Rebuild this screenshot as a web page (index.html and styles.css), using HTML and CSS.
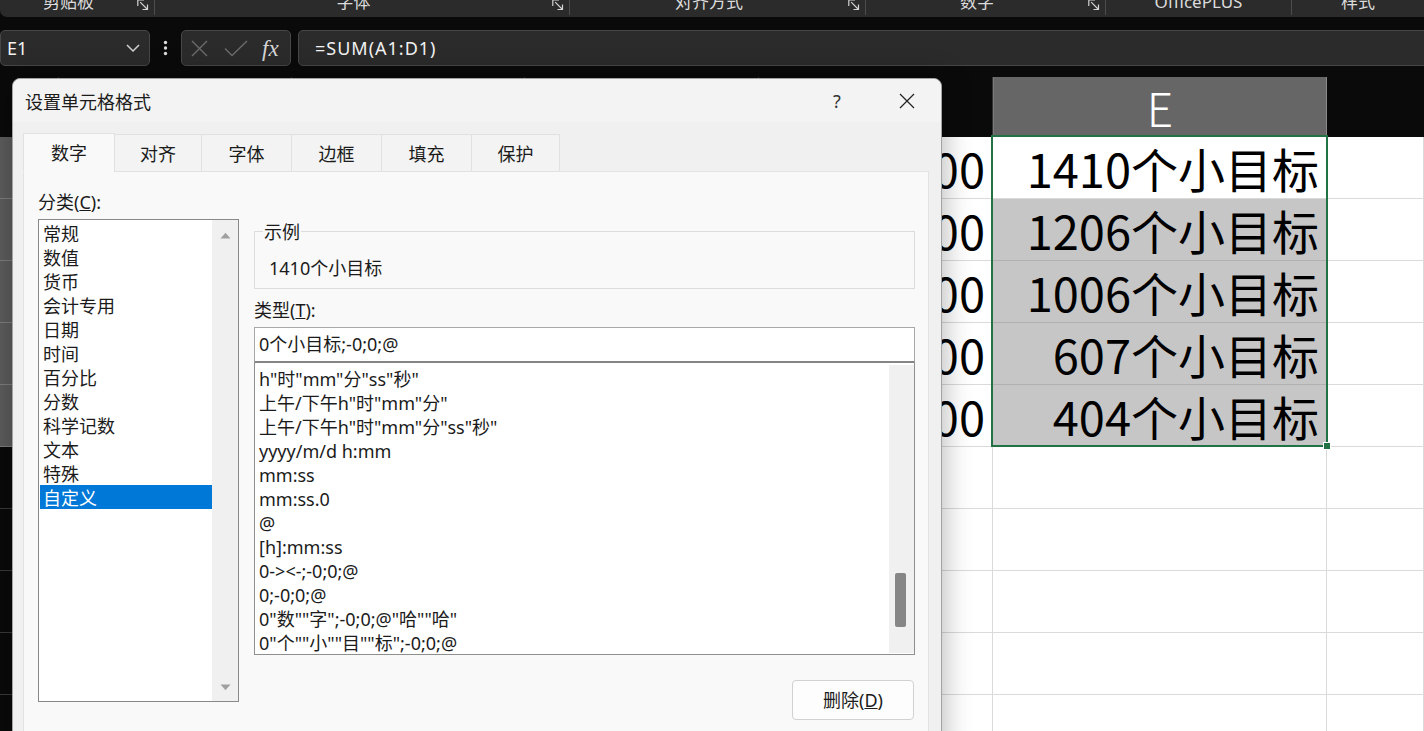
FILE: index.html
```html
<!DOCTYPE html>
<html lang="zh-CN">
<head>
<meta charset="utf-8">
<title>设置单元格格式</title>
<link rel="stylesheet" href="styles.css">
</head>
<body>
<div class="app">
  <div class="ribbon">
    <div class="rgroup g1"><span class="rlabel">剪贴板</span><svg class="launcher" viewBox="0 0 12 12"><path d="M0.8 7V0.8H7M3.2 3.2L10.5 10.5M10.5 5.5V10.5H5.5"/></svg></div>
    <div class="rgroup g2"><span class="rlabel">字体</span><svg class="launcher" viewBox="0 0 12 12"><path d="M0.8 7V0.8H7M3.2 3.2L10.5 10.5M10.5 5.5V10.5H5.5"/></svg></div>
    <div class="rgroup g3"><span class="rlabel">对齐方式</span><svg class="launcher" viewBox="0 0 12 12"><path d="M0.8 7V0.8H7M3.2 3.2L10.5 10.5M10.5 5.5V10.5H5.5"/></svg></div>
    <div class="rgroup g4"><span class="rlabel">数字</span><svg class="launcher" viewBox="0 0 12 12"><path d="M0.8 7V0.8H7M3.2 3.2L10.5 10.5M10.5 5.5V10.5H5.5"/></svg></div>
    <div class="rgroup g5"><span class="rlabel">OfficePLUS</span></div>
    <div class="rgroup g6"><span class="rlabel">样式</span></div>
  </div>

  <div class="formula-row">
    <div class="namebox"><span class="nb-text">E1</span><svg class="chev" viewBox="0 0 14 8"><path d="M1 1l6 6 6-6"/></svg></div>
    <div class="dots"><svg viewBox="0 0 5 16"><circle cx="2.5" cy="2.5" r="1.7"/><circle cx="2.5" cy="8" r="1.7"/><circle cx="2.5" cy="13.5" r="1.7"/></svg></div>
    <div class="fxbox">
      <svg class="fx-x" viewBox="0 0 17 17"><path d="M1 1L16 16M16 1L1 16"/></svg>
      <svg class="fx-ok" viewBox="0 0 24 17"><path d="M1 8.5L8 15.5L23 1"/></svg>
      <span class="fx">fx</span>
    </div>
    <div class="formula">=SUM(A1:D1)</div>
  </div>

  <div class="sheet">
    <div class="grid">
      <div class="ch corner"></div><div class="ch"></div><div class="ch"></div><div class="ch"></div><div class="ch"></div><div class="ch on">E</div><div class="ch last"></div>

      <div class="rh on"></div><div class="c"></div><div class="c"></div><div class="c"></div><div class="c">500</div><div class="c">1410个小目标</div><div class="c"></div>
      <div class="rh on"></div><div class="c"></div><div class="c"></div><div class="c"></div><div class="c">400</div><div class="c g">1206个小目标</div><div class="c"></div>
      <div class="rh on"></div><div class="c"></div><div class="c"></div><div class="c"></div><div class="c">300</div><div class="c g">1006个小目标</div><div class="c"></div>
      <div class="rh on"></div><div class="c"></div><div class="c"></div><div class="c"></div><div class="c">200</div><div class="c g">607个小目标</div><div class="c"></div>
      <div class="rh on"></div><div class="c"></div><div class="c"></div><div class="c"></div><div class="c">100</div><div class="c g">404个小目标</div><div class="c"></div>
      <div class="rh"></div><div class="c"></div><div class="c"></div><div class="c"></div><div class="c"></div><div class="c"></div><div class="c"></div>
      <div class="rh"></div><div class="c"></div><div class="c"></div><div class="c"></div><div class="c"></div><div class="c"></div><div class="c"></div>
      <div class="rh"></div><div class="c"></div><div class="c"></div><div class="c"></div><div class="c"></div><div class="c"></div><div class="c"></div>
      <div class="rh"></div><div class="c"></div><div class="c"></div><div class="c"></div><div class="c"></div><div class="c"></div><div class="c"></div>
      <div class="rh"></div><div class="c"></div><div class="c"></div><div class="c"></div><div class="c"></div><div class="c"></div><div class="c"></div>
    </div>
    <div class="selection"><span class="handle"></span></div>
  </div>

  <div class="dialog">
    <div class="titlebar">
      <span class="title">设置单元格格式</span>
      <span class="tb-btn tb-help">?</span>
      <span class="tb-btn"><svg class="close" viewBox="0 0 16 16"><path d="M1 1L15 15M15 1L1 15"/></svg></span>
    </div>
    <div class="tabs">
      <div class="tab active t1">数字</div>
      <div class="tab t2">对齐</div>
      <div class="tab t3">字体</div>
      <div class="tab t4">边框</div>
      <div class="tab t5">填充</div>
      <div class="tab t6">保护</div>
    </div>
    <div class="panel">
      <div class="col-left">
        <div class="label">分类(<u>C</u>):</div>
        <div class="catlist">
          <div class="cat-items">
            <div class="cat-item">常规</div>
            <div class="cat-item">数值</div>
            <div class="cat-item">货币</div>
            <div class="cat-item">会计专用</div>
            <div class="cat-item">日期</div>
            <div class="cat-item">时间</div>
            <div class="cat-item">百分比</div>
            <div class="cat-item">分数</div>
            <div class="cat-item">科学记数</div>
            <div class="cat-item">文本</div>
            <div class="cat-item">特殊</div>
            <div class="cat-item sel">自定义</div>
          </div>
          <div class="cat-scroll">
            <svg class="arrow" viewBox="0 0 11 7"><path d="M0.5 6.5L5.5 0.8L10.5 6.5Z"/></svg>
            <svg class="arrow" viewBox="0 0 11 7"><path d="M0.5 0.5L5.5 6.2L10.5 0.5Z"/></svg>
          </div>
        </div>
      </div>
      <div class="col-right">
        <fieldset class="sample">
          <legend>示例</legend>
          <div class="sample-val">1410个小目标</div>
        </fieldset>
        <div class="type-label">类型(<u>T</u>):</div>
        <div class="type-input">0个小目标;-0;0;@</div>
        <div class="type-list">
          <div class="type-items">
            <div class="type-item">h"时"mm"分"ss"秒"</div>
            <div class="type-item">上午/下午h"时"mm"分"</div>
            <div class="type-item">上午/下午h"时"mm"分"ss"秒"</div>
            <div class="type-item">yyyy/m/d h:mm</div>
            <div class="type-item">mm:ss</div>
            <div class="type-item">mm:ss.0</div>
            <div class="type-item">@</div>
            <div class="type-item">[h]:mm:ss</div>
            <div class="type-item">0-&gt;&lt;-;-0;0;@</div>
            <div class="type-item">0;-0;0;@</div>
            <div class="type-item">0"数""字";-0;0;@"哈""哈"</div>
            <div class="type-item">0"个""小""目""标";-0;0;@</div>
          </div>
          <div class="type-scroll"><div class="thumb"></div></div>
        </div>
        <div class="btn-row"><button class="btn" type="button">删除(<u>D</u>)</button></div>
      </div>
    </div>
  </div>
</div>
</body>
</html>
```
FILE: styles.css
```css
* { box-sizing: border-box; margin: 0; padding: 0; }
html, body { width: 1424px; height: 731px; overflow: hidden; background: #0a0a0a; }
body { font-family: "Noto Sans", "Noto Sans CJK SC", sans-serif; }
.app { position: relative; width: 1424px; height: 731px; overflow: hidden; background: #0a0a0a; }

/* ribbon */
.ribbon { height: 17px; background: #2b2b2b; border-bottom-left-radius: 7px; display: flex; overflow: hidden; color: #dcdcdc; font-size: 17px; }
.rgroup { display: flex; align-items: flex-start; height: 15px; border-right: 1px solid #4d4d4d; padding-right: 5px; }
.rlabel { flex: 1; text-align: center; line-height: 17px; margin-top: -7px; white-space: nowrap; }
.launcher { width: 12px; height: 12px; margin-top: -1px; fill: none; stroke: #d4d4d4; stroke-width: 1.2; }
.g1 { width: 155px; }
.g2 { width: 415px; }
.g3 { width: 296px; }
.g4 { width: 240px; }
.g5 { width: 186px; padding-right: 0; }
.g6 { flex: 1; border-right: none; padding-right: 0; }

/* formula bar */
.formula-row { display: flex; height: 36px; margin-top: 13px; }
.namebox { width: 150px; border: 1px solid #474747; border-radius: 5px; background: #2b2b2b; display: flex; align-items: center; padding: 0 9px 0 6px; color: #f2f2f2; font-size: 18px; }
.nb-text { flex: 1; }
.chev { width: 14px; height: 8px; fill: none; stroke: #cfcfcf; stroke-width: 1.5; }
.dots { width: 5px; margin: 0 13px; display: flex; align-items: center; }
.dots svg { width: 5px; height: 16px; fill: #dcdcdc; }
.fxbox { width: 110px; border: 1px solid #474747; border-radius: 5px; background: #2b2b2b; display: flex; align-items: center; padding-left: 9px; }
.fx-x { width: 17px; height: 17px; fill: none; stroke: #6c6c6c; stroke-width: 1.4; }
.fx-ok { width: 24px; height: 17px; margin-left: 16px; fill: none; stroke: #6c6c6c; stroke-width: 1.4; }
.fx { margin-left: 14px; font-family: "Liberation Serif", serif; font-style: italic; font-size: 23px; color: #d6d6d6; line-height: 1; }
.formula { flex: 1; margin-left: 7px; margin-right: -8px; border: 1px solid #474747; border-radius: 5px; background: #2b2b2b; padding-left: 16px; color: #f2f2f2; font-size: 18px; letter-spacing: 1px; display: flex; align-items: center; }

/* sheet */
.sheet { position: relative; margin-top: 11px; }
.grid { display: grid; grid-template-columns: 59px 233px 233px 234px 234px 334px 97px; grid-template-rows: 60px repeat(10, 62px); }
.ch { background: #0a0a0a; border-right: 1px solid #333; color: #cfcfcf; text-align: center; font: 46px/60px "Noto Sans CJK SC", sans-serif; }
.ch.on { background: #666666; color: #ffffff; border-left: 1px solid #7a7a7a; border-right: 1px solid #8a8a8a; font-weight: 300; }
.ch.last { border-right: none; }
.rh { background: #0a0a0a; border-bottom: 1px solid #3a3a3a; border-right: 1px solid #3a3a3a; }
.rh.on { background: #5e5e5e; border-bottom-color: #808080; }
.c { background: #ffffff; border-right: 1px solid #dadada; border-bottom: 1px solid #dadada; font: 47px/61px "Noto Sans CJK SC", sans-serif; text-align: right; padding-right: 7px; color: #000; white-space: nowrap; overflow: hidden; }
.c.g { background: #c6c6c6; border-bottom-color: #b0b0b0; }
.selection { position: absolute; left: 991px; top: 58px; width: 337px; height: 312px; border: 2px solid #217346; }
.handle { position: absolute; right: -5px; bottom: -5px; width: 8px; height: 8px; background: #217346; border: 1px solid #ffffff; }

/* dialog */
.dialog { position: absolute; left: 12px; top: 78px; width: 930px; height: 700px; background: #f0f0f0; border: 1px solid #a3a3a3; border-radius: 8px 8px 0 0; box-shadow: 0 0 30px rgba(0, 0, 0, 0.32); font-size: 18px; color: #1b1b1b; display: flex; flex-direction: column; }
.titlebar { height: 43px; flex: none; background: #f3f3f3; display: flex; align-items: center; padding: 0 11px 0 12px; border-radius: 8px 8px 0 0; }
.title { flex: 1; font-family: "Noto Sans CJK SC", sans-serif; }
.tb-btn { width: 46px; display: flex; justify-content: center; }
.tb-help { margin-right: 24px; color: #333; }
.close { width: 16px; height: 16px; fill: none; stroke: #1f1f1f; stroke-width: 1.2; }

.tabs { height: 50px; flex: none; display: flex; align-items: flex-end; padding-left: 10px; margin-bottom: -1px; position: relative; z-index: 1; }
.tab { height: 38px; border: 1px solid #e1e1e1; background: #f3f3f3; text-align: center; line-height: 37px; font-family: "Noto Sans CJK SC", sans-serif; margin-left: -1px; }
.tab.active { height: 39px; background: #f9f9f9; border-bottom-color: #f9f9f9; margin-left: 0; }
.t1 { width: 92px; }
.t2 { width: 88px; }
.t3 { width: 91px; }
.t4 { width: 91px; }
.t5 { width: 91px; }
.t6 { width: 89px; }

.panel { flex: 1; margin: 0 12px 0 10px; background: #f9f9f9; border: 1px solid #e3e3e3; padding: 18px 13px 0 14px; display: grid; grid-template-columns: 201px 661px; column-gap: 15px; align-items: start; }
.label { height: 24px; line-height: 24px; }
.catlist { margin-top: 5px; height: 483px; border: 1px solid #898989; background: #ffffff; display: flex; }
.cat-items { flex: 1; padding-top: 1px; }
.cat-item { height: 24px; line-height: 24px; padding-left: 3px; margin-left: 1px; font-family: "Noto Sans CJK SC", sans-serif; }
.cat-item.sel { background: #0078d7; color: #ffffff; }
.cat-scroll { width: 26px; background: #f0f0f0; display: flex; flex-direction: column; justify-content: space-between; align-items: center; padding: 12px 0 10px; }
.arrow { width: 11px; height: 7px; fill: #a0a0a0; }

.sample { margin-top: 32px; border: 1px solid #dcdcdc; padding: 0 0 8px 8px; min-width: 0; }
.sample legend { padding: 0 1px; line-height: 18px; font-family: "Noto Sans CJK SC", sans-serif; }
.sample-val { margin: 16px 0 0 6px; line-height: 24px; }
.type-label { margin-top: 9px; height: 24px; line-height: 24px; }
.type-input { margin-top: 5px; height: 36px; border: 1px solid #a8a8a8; border-bottom: 2px solid #858585; background: #ffffff; padding-left: 4px; line-height: 33px; white-space: nowrap; }
.type-list { height: 292px; border: 1px solid #8f8f8f; border-top: none; background: #ffffff; display: flex; overflow: hidden; }
.type-items { flex: 1; padding: 4px 0 0 4px; overflow: hidden; }
.type-item { height: 24px; line-height: 24px; white-space: nowrap; }
.type-scroll { width: 25px; background: #f0f0f0; margin: 2px 0 1px; }
.thumb { margin: 208px 0 0 6px; width: 11px; height: 54px; background: #868686; border-radius: 2px; }
.btn-row { margin-top: 25px; display: flex; justify-content: flex-end; padding-right: 1px; }
.btn { width: 122px; height: 40px; border: 1px solid #d1d1d1; border-radius: 4px; background: #fdfdfd; font: inherit; color: inherit; line-height: 38px; text-align: center; }
```
